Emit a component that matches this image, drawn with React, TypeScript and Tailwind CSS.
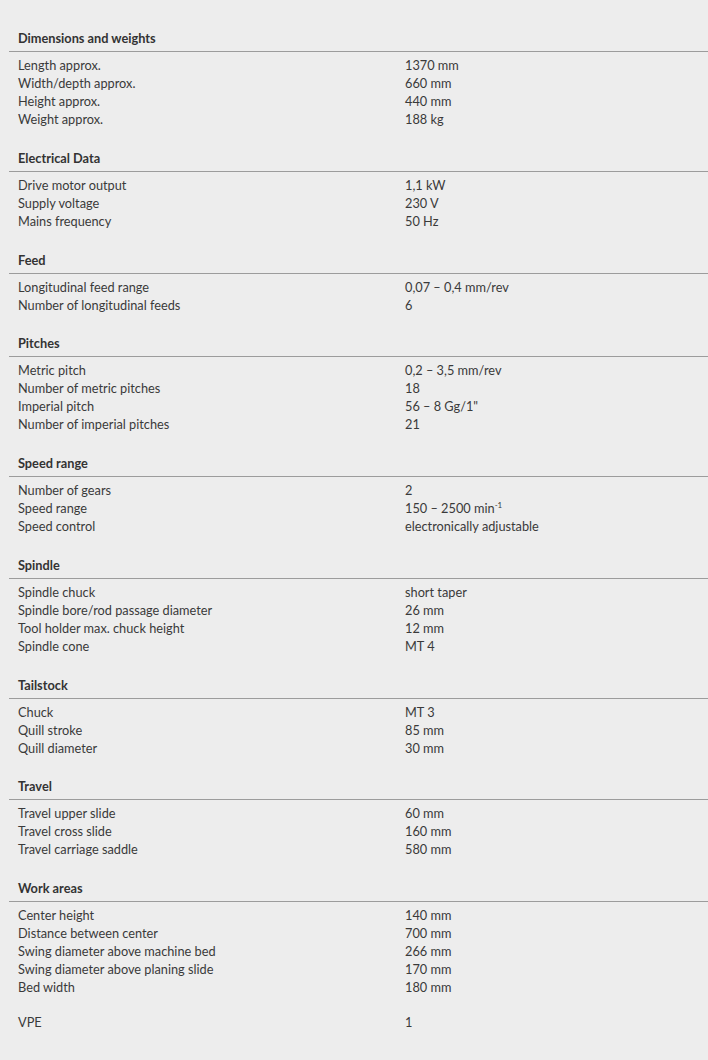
import React from 'react'

type Row = { label: string; value: React.ReactNode }
type Section = { title?: string; rows: Row[] }

const SECTIONS: Section[] = [
  {
    title: 'Dimensions and weights',
    rows: [
      { label: 'Length approx.', value: '1370 mm' },
      { label: 'Width/depth approx.', value: '660 mm' },
      { label: 'Height approx.', value: '440 mm' },
      { label: 'Weight approx.', value: '188 kg' },
    ],
  },
  {
    title: 'Electrical Data',
    rows: [
      { label: 'Drive motor output', value: '1,1 kW' },
      { label: 'Supply voltage', value: '230 V' },
      { label: 'Mains frequency', value: '50 Hz' },
    ],
  },
  {
    title: 'Feed',
    rows: [
      { label: 'Longitudinal feed range', value: '0,07 – 0,4 mm/rev' },
      { label: 'Number of longitudinal feeds', value: '6' },
    ],
  },
  {
    title: 'Pitches',
    rows: [
      { label: 'Metric pitch', value: '0,2 – 3,5 mm/rev' },
      { label: 'Number of metric pitches', value: '18' },
      { label: 'Imperial pitch', value: '56 – 8 Gg/1"' },
      { label: 'Number of imperial pitches', value: '21' },
    ],
  },
  {
    title: 'Speed range',
    rows: [
      { label: 'Number of gears', value: '2' },
      {
        label: 'Speed range',
        value: (
          <>
            150 – 2500 min<sup className="text-[8px] top-[-5px]">-1</sup>
          </>
        ),
      },
      { label: 'Speed control', value: 'electronically adjustable' },
    ],
  },
  {
    title: 'Spindle',
    rows: [
      { label: 'Spindle chuck', value: 'short taper' },
      { label: 'Spindle bore/rod passage diameter', value: '26 mm' },
      { label: 'Tool holder max. chuck height', value: '12 mm' },
      { label: 'Spindle cone', value: 'MT 4' },
    ],
  },
  {
    title: 'Tailstock',
    rows: [
      { label: 'Chuck', value: 'MT 3' },
      { label: 'Quill stroke', value: '85 mm' },
      { label: 'Quill diameter', value: '30 mm' },
    ],
  },
  {
    title: 'Travel',
    rows: [
      { label: 'Travel upper slide', value: '60 mm' },
      { label: 'Travel cross slide', value: '160 mm' },
      { label: 'Travel carriage saddle', value: '580 mm' },
    ],
  },
  {
    title: 'Work areas',
    rows: [
      { label: 'Center height', value: '140 mm' },
      { label: 'Distance between center', value: '700 mm' },
      { label: 'Swing diameter above machine bed', value: '266 mm' },
      { label: 'Swing diameter above planing slide', value: '170 mm' },
      { label: 'Bed width', value: '180 mm' },
    ],
  },
  {
    rows: [{ label: 'VPE', value: '1' }],
  },
]

export default function App() {
  return (
    <div
      className="min-h-[1060px] w-[708px] bg-[#ededed] pl-[9px] pt-[29px] text-[12.75px] leading-[18px] text-[#3a3a3a]"
      style={{ fontFamily: 'Lato, "Open Sans", sans-serif' }}
    >
      <div className="flex flex-col gap-[20.75px]">
        {SECTIONS.map((section, i) => (
          <div key={i}>
            {section.title && (
              <div className="border-b border-[#9c9c9c] pb-[4px] pl-[9px] font-bold text-[#333]">
                {section.title}
              </div>
            )}
            <div className={section.title ? 'pt-[4px]' : 'mt-[-4px]'}>
              {section.rows.map(row => (
                <div key={row.label} className="flex pl-[9px]">
                  <div className="w-[387px] shrink-0">{row.label}</div>
                  <div>{row.value}</div>
                </div>
              ))}
            </div>
          </div>
        ))}
      </div>
    </div>
  )
}
